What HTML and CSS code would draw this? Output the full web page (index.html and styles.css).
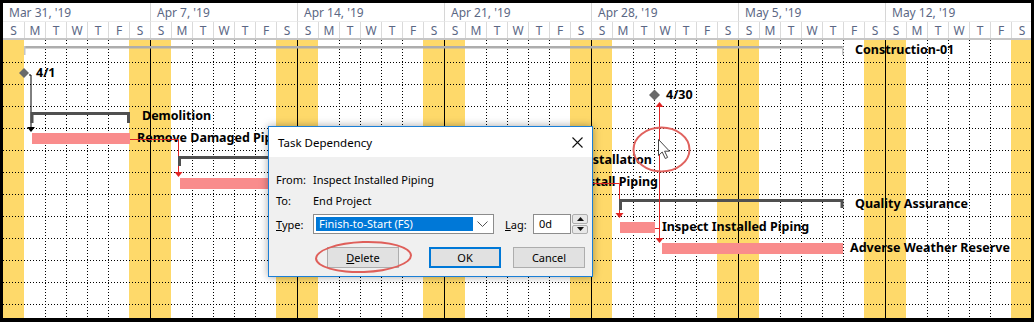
FILE: index.html
```html
<!DOCTYPE html>
<html lang="en">
<head>
    <meta charset="UTF-8">
    <title>Gantt Chart - Task Dependency</title>
    <link rel="stylesheet" href="styles.css">
</head>
<body>
<div class="frame">
    <div class="timescale">
        <div class="week"><div class="wdate">Mar 31, '19</div><div class="days"><span>S</span><span>M</span><span>T</span><span>W</span><span>T</span><span>F</span><span>S</span></div></div>
        <div class="week"><div class="wdate">Apr 7, '19</div><div class="days"><span>S</span><span>M</span><span>T</span><span>W</span><span>T</span><span>F</span><span>S</span></div></div>
        <div class="week"><div class="wdate">Apr 14, '19</div><div class="days"><span>S</span><span>M</span><span>T</span><span>W</span><span>T</span><span>F</span><span>S</span></div></div>
        <div class="week"><div class="wdate">Apr 21, '19</div><div class="days"><span>S</span><span>M</span><span>T</span><span>W</span><span>T</span><span>F</span><span>S</span></div></div>
        <div class="week"><div class="wdate">Apr 28, '19</div><div class="days"><span>S</span><span>M</span><span>T</span><span>W</span><span>T</span><span>F</span><span>S</span></div></div>
        <div class="week"><div class="wdate">May 5, '19</div><div class="days"><span>S</span><span>M</span><span>T</span><span>W</span><span>T</span><span>F</span><span>S</span></div></div>
        <div class="week"><div class="wdate">May 12, '19</div><div class="days"><span>S</span><span>M</span><span>T</span><span>W</span><span>T</span><span>F</span><span>S</span></div></div>
    </div>

    <div class="chart">
        <div class="cols">
            <div class="col we sun first"></div><div class="col"></div><div class="col wd"></div><div class="col wd"></div><div class="col wd"></div><div class="col wd"></div><div class="col we"></div>
            <div class="col we sun"></div><div class="col"></div><div class="col wd"></div><div class="col wd"></div><div class="col wd"></div><div class="col wd"></div><div class="col we"></div>
            <div class="col we sun"></div><div class="col"></div><div class="col wd"></div><div class="col wd"></div><div class="col wd"></div><div class="col wd"></div><div class="col we"></div>
            <div class="col we sun"></div><div class="col"></div><div class="col wd"></div><div class="col wd"></div><div class="col wd"></div><div class="col wd"></div><div class="col we"></div>
            <div class="col we sun"></div><div class="col"></div><div class="col wd"></div><div class="col wd"></div><div class="col wd"></div><div class="col wd"></div><div class="col we"></div>
            <div class="col we sun"></div><div class="col"></div><div class="col wd"></div><div class="col wd"></div><div class="col wd"></div><div class="col wd"></div><div class="col we"></div>
            <div class="col we sun"></div><div class="col"></div><div class="col wd"></div><div class="col wd"></div><div class="col wd"></div><div class="col wd"></div><div class="col we"></div>
        </div>
        <div class="rows">
            <div></div><div></div><div></div><div></div><div></div><div></div><div></div>
            <div></div><div></div><div></div><div></div><div></div><div></div>
        </div>
    </div>

    <!-- bars, links and labels, in page coordinates -->
    <svg class="gantt" viewBox="3 3 1028 315" width="1028" height="315">
        <defs>
            <clipPath id="underDialog"><rect x="3" y="3" width="265" height="315"/></clipPath>
        </defs>
        <!-- Construction-01 -->
        <rect x="25" y="46" width="818" height="2.5" fill="#adadad"/>
        <rect x="24" y="46" width="1.5" height="9" fill="#c4c4c4"/>
        <rect x="842" y="46" width="1.5" height="9" fill="#c4c4c4"/>
        <text class="gl" x="855" y="54">Construction-01</text>

        <!-- 4/1 start milestone -->
        <path d="M29 75H31V127" stroke="#000" fill="none"/>
        <path d="M27 127H35L31 132Z" fill="#000"/>
        <path d="M24 68L29 73L24 78L19 73Z" fill="#6a6a6a"/>
        <text class="gl" x="36" y="77">4/1</text>

        <!-- Demolition -->
        <path d="M32 123V113.5H128.5V123" stroke="#505050" stroke-width="3" fill="none"/>
        <text class="gl" x="142" y="120">Demolition</text>
        <rect x="32" y="133" width="98" height="11" fill="#f98c8c"/>
        <text class="gl" x="137" y="142" clip-path="url(#underDialog)">Remove Damaged Piping</text>
        <path d="M130 139.5H178.5V172" stroke="#e02424" fill="none"/>
        <path d="M174.5 172H182.5L178.5 177Z" fill="#e02424"/>

        <!-- Installation -->
        <path d="M179.5 166V157.5H568V166" stroke="#505050" stroke-width="3" fill="none"/>
        <text class="gl" x="652" y="164" text-anchor="end">Installation</text>
        <rect x="180" y="178" width="396" height="11" fill="#f98c8c"/>
        <text class="gl" x="658" y="186" text-anchor="end">Install Piping</text>
        <path d="M576 183.5H619.5V213" stroke="#e02424" fill="none"/>
        <path d="M615.5 213H623.5L619.5 218Z" fill="#e02424"/>

        <!-- Quality Assurance -->
        <path d="M620.5 210V200.5H842V208" stroke="#505050" stroke-width="3" fill="none"/>
        <text class="gl" x="855" y="208">Quality Assurance</text>
        <rect x="620" y="222" width="35" height="11" fill="#f98c8c"/>
        <text class="gl" x="662" y="231">Inspect Installed Piping</text>

        <!-- 4/30 end milestone and selected link -->
        <path d="M654.5 89.5L660 95L654.5 100.5L649 95Z" fill="#6a6a6a"/>
        <text class="gl" x="666" y="99">4/30</text>
        <path d="M659.5 106V238M655 228.5H659.5" stroke="#e02424" fill="none"/>
        <path d="M655.5 107H663.5L659.5 102Z" fill="#e02424"/>
        <path d="M655.5 238H663.5L659.5 243Z" fill="#e02424"/>
        <rect x="662" y="243" width="181" height="11" fill="#f98c8c"/>
        <text class="gl" x="850" y="252">Adverse Weather Reserve</text>

        <!-- highlight and mouse pointer -->
        <ellipse cx="661.5" cy="149.5" rx="28" ry="22" fill="none" stroke="#e0625e" stroke-width="2"/>
        <path d="M658.5 139.5V155.5L662.2 152L665.3 158.5L667.6 157.4L664.6 151.2H669.5Z" fill="#fff" stroke="#444" stroke-width="1" stroke-linejoin="round"/>
    </svg>

    <div class="dialog">
        <div class="dtitle">
            <span>Task Dependency</span>
            <svg class="close" width="11" height="11" viewBox="0 0 11 11"><path d="M0.5 0.5L10.5 10.5M10.5 0.5L0.5 10.5" stroke="#111" stroke-width="1.1"/></svg>
        </div>
        <div class="dbody">
            <div class="drow"><span class="dlabel">From:</span><span>Inspect Installed Piping</span></div>
            <div class="drow"><span class="dlabel">To:</span><span>End Project</span></div>
            <div class="drow type">
                <span class="dlabel"><u>T</u>ype:</span>
                <div class="combo">
                    <span class="sel">Finish-to-Start (FS)</span>
                    <svg class="chev" width="11" height="6" viewBox="0 0 11 6"><path d="M0.5 0.5L5.5 5.5L10.5 0.5" stroke="#555" fill="none"/></svg>
                </div>
                <span class="laglabel"><u>L</u>ag:</span>
                <div class="lag">0d</div>
                <div class="spin">
                    <span><svg width="7" height="4" viewBox="0 0 7 4"><path d="M0 4H7L3.5 0Z" fill="#111"/></svg></span>
                    <span><svg width="7" height="4" viewBox="0 0 7 4"><path d="M0 0H7L3.5 4Z" fill="#111"/></svg></span>
                </div>
            </div>
            <div class="btns">
                <button class="btn"><u>D</u>elete</button>
                <button class="btn default">OK</button>
                <button class="btn">Cancel</button>
            </div>
        </div>
        <div class="ring"></div>
    </div>
</div>
</body>
</html>
```

FILE: styles.css
```css
body { margin: 0; background: #000; }
.frame { position: relative; width: 1028px; height: 315px; margin: 3px 3px 4px 3px; background: #fff; overflow: hidden; }

/* timescale */
.timescale { display: flex; height: 37px; border-bottom: 2px solid #c6c6c6; box-sizing: border-box; }
.week { width: 147px; flex: none; }
.wdate { height: 19px; box-sizing: border-box; border-left: 1px solid #d6d6d6; border-bottom: 1px solid #ececec; padding: 1px 0 0 6px; font: 12px/18px "Noto Sans", sans-serif; color: #5b6784; }
.days { display: flex; height: 16px; }
.days span { width: 21px; flex: none; box-sizing: border-box; border-left: 1px solid #dadada; text-align: center; font: 12px/17px "Noto Sans", sans-serif; color: #5b6784; }
.week:first-child .wdate, .week:first-child .days span:first-child { border-left: none; }

/* chart grid */
.chart { position: relative; height: 278px; }
.cols { display: flex; height: 100%; }
.col { width: 21px; flex: none; box-sizing: border-box; }
.col.wd { background: linear-gradient(#000 1px, transparent 1px) left top / 1px 3px repeat-y; }
.col.we { background: #fed96a; }
.col.sun { border-left: 1px solid #000; }
.col.first { border-left: none; }
.rows { position: absolute; left: 0; top: 0; right: 0; bottom: 0; padding-top: 1px; display: flex; flex-direction: column; }
.rows div { height: 22px; flex: none; background: linear-gradient(to right, #000 1px, transparent 1px) left bottom / 3px 1px repeat-x; }

.gantt { position: absolute; left: 0; top: 0; }
.gl { font-family: "Noto Sans", sans-serif; font-size: 12.5px; font-weight: bold; fill: #000; }

/* task dependency dialog */
.dialog { position: absolute; left: 265px; top: 123px; width: 325px; height: 151px; box-sizing: border-box; border: 1px solid #1b7fd6; background: #f0f0f0; box-shadow: 0 0 8px rgba(0,0,0,0.35); font: 11px "Noto Sans", sans-serif; color: #000; }
.dtitle { height: 30px; background: #fff; display: flex; align-items: center; justify-content: space-between; padding: 0 9px 0 9px; font-size: 11.5px; }
.close { display: block; }
.dbody { padding: 12px 0 0 7px; }
.drow { display: flex; align-items: center; height: 21px; }
.dlabel { width: 37px; flex: none; }
.drow.type { height: 20px; margin-top: 3px; }
.combo { width: 181px; height: 20px; box-sizing: border-box; border: 1px solid #8c8c8c; background: #fff; display: flex; align-items: center; padding-left: 2px; }
.sel { width: 157px; height: 14px; box-sizing: border-box; padding-left: 3px; background: #0078d7; color: #fff; line-height: 14px; }
.chev { margin-left: auto; margin-right: 5px; }
.laglabel { width: 28px; margin-left: 11px; }
.lag { width: 38px; height: 20px; box-sizing: border-box; border: 1px solid #8c8c8c; background: #fff; padding-left: 5px; line-height: 18px; }
.spin { width: 16px; height: 20px; display: flex; flex-direction: column; gap: 1px; margin-left: 1px; }
.spin span { flex: 1; display: flex; align-items: center; justify-content: center; border: 1px solid #adadad; background: #e8e8e8; border-radius: 2px; }
.spin svg { display: block; }
.btns { display: flex; margin-top: 13px; padding-left: 51px; }
.btn { width: 72px; height: 21px; box-sizing: border-box; border: 1px solid #adadad; background: #e1e1e1; font: 11px "Noto Sans", sans-serif; color: #000; padding: 0; }
.btn.default { border: 2px solid #0078d7; margin-left: 30px; }
.btn.default + .btn { margin-left: 12px; }
.ring { position: absolute; left: 46px; top: 114px; width: 97px; height: 32px; box-sizing: border-box; border: 2px solid #df5f5a; border-radius: 50%; transform: rotate(-2deg); }
```
